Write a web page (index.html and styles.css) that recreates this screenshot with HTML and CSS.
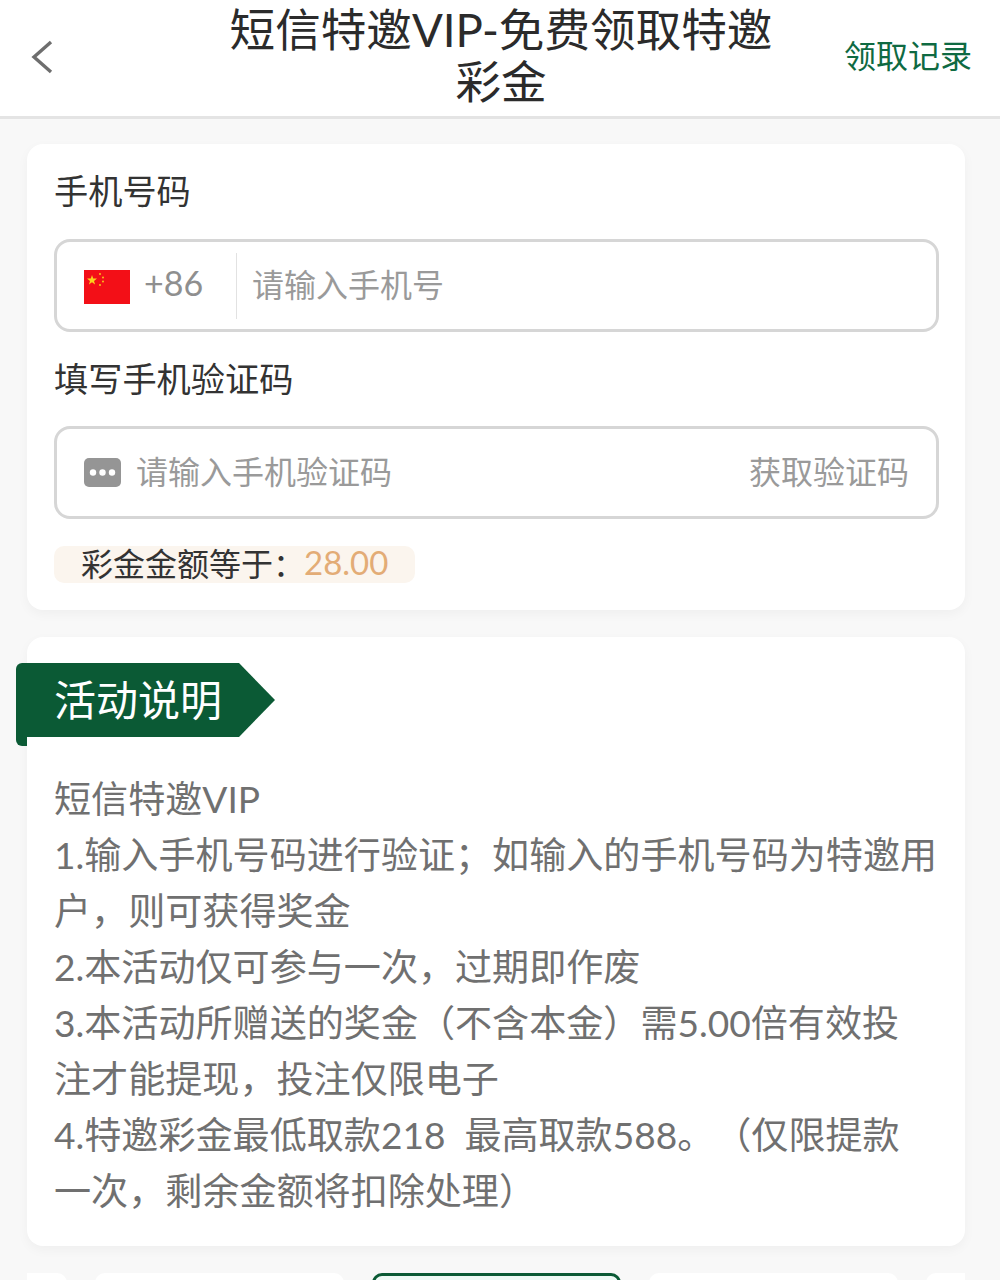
FILE: index.html
```html
<!DOCTYPE html>
<html lang="zh-CN">
<head>
    <meta charset="UTF-8">
    <meta name="viewport" content="width=device-width, initial-scale=1.0">
    <title>短信特邀VIP</title>
    <link rel="stylesheet" href="styles.css">
</head>
<body>
    <div class="page">
        <header class="topbar">
            <a class="back" href="#back" aria-label="返回">
                <svg width="24" height="34" viewBox="0 0 24 34" fill="none" stroke="#6e6e6e" stroke-width="3.4">
                    <path d="M21 2 L4 17 L21 32"/>
                </svg>
            </a>
            <h1 class="title">短信特邀VIP-免费领取特邀彩金</h1>
            <a class="records" href="#records">领取记录</a>
        </header>

        <main class="content">
            <section class="card form_card">
                <div class="field_label">手机号码</div>
                <div class="input_box">
                    <svg class="flag" viewBox="0 0 46 34" width="46" height="34">
                        <rect width="46" height="34" fill="#f30f17"/>
                        <polygon points="8,5 9.2,8.6 13,8.6 10,10.9 11.1,14.5 8,12.3 4.9,14.5 6,10.9 3,8.6 6.8,8.6" fill="#fbd21c"/>
                        <circle cx="16" cy="4" r="0.9" fill="#fbd21c"/>
                        <circle cx="19" cy="7.5" r="0.9" fill="#fbd21c"/>
                        <circle cx="19" cy="11.5" r="0.9" fill="#fbd21c"/>
                        <circle cx="16" cy="15" r="0.9" fill="#fbd21c"/>
                    </svg>
                    <span class="code">+86</span>
                    <span class="divider"></span>
                    <span class="placeholder">请输入手机号</span>
                </div>
                <div class="field_label second">填写手机验证码</div>
                <div class="input_box">
                    <svg class="sms_icon" viewBox="0 0 37 29" width="37" height="29">
                        <rect width="37" height="29" rx="5" fill="#959595"/>
                        <circle cx="9" cy="14.5" r="3.2" fill="#fff"/>
                        <circle cx="18.5" cy="14.5" r="3.2" fill="#fff"/>
                        <circle cx="28" cy="14.5" r="3.2" fill="#fff"/>
                    </svg>
                    <span class="placeholder grow">请输入手机验证码</span>
                    <span class="placeholder">获取验证码</span>
                </div>
                <div class="bonus">
                    <span class="bonus_label">彩金金额等于：</span>
                    <span class="bonus_value">28.00</span>
                </div>
            </section>

            <section class="card info_card">
                <div class="ribbon_wrap">
                    <h2 class="ribbon">活动说明</h2>
                </div>
                <div class="info_text">
                    <p>短信特邀VIP</p>
                    <p>1.输入手机号码进行验证；如输入的手机号码为特邀用<br>户，则可获得奖金</p>
                    <p>2.本活动仅可参与一次，过期即作废</p>
                    <p>3.本活动所赠送的奖金（不含本金）需5.00倍有效投<br>注才能提现，投注仅限电子</p>
                    <p>4.特邀彩金最低取款218&nbsp;&nbsp;最高取款588。（仅限提款<br>一次，剩余金额将扣除处理）</p>
                </div>
            </section>

            <div class="tabs">
                <div class="tab"></div>
                <div class="tab"></div>
                <div class="tab active"></div>
                <div class="tab"></div>
                <div class="tab"></div>
            </div>
        </main>
    </div>
</body>
</html>
```

FILE: styles.css
```css
html, body {
    margin: 0;
    padding: 0;
}
body {
    font-family: Lato, "Noto Sans CJK SC", sans-serif;
    background-color: #f8f8f8;
    text-spacing-trim: space-all;
}
.page {
    height: 1280px;
    overflow: hidden;
}
.topbar {
    height: 116px;
    background: #ffffff;
    border-bottom: 3px solid #e4e4e4;
    display: grid;
    grid-template-columns: 1fr 560px 1fr;
    align-items: center;
    padding: 0 28px 0 30px;
}
.back {
    display: flex;
    width: 24px;
    margin-top: -2px;
}
.title {
    margin: 0 0 4px;
    font-size: 45.6px;
    font-weight: 400;
    line-height: 52px;
    color: #2b2b2b;
    text-align: center;
}
.records {
    color: #0f6a42;
    font-size: 32px;
    text-decoration: none;
    white-space: nowrap;
    justify-self: end;
    margin-bottom: 8px;
}
.content {
    padding: 25px 35px 0 27px;
}
.card {
    background: #ffffff;
    border-radius: 16px;
    box-shadow: 0 4px 12px rgba(0, 0, 0, 0.04);
}
.form_card {
    height: 466px;
    box-sizing: border-box;
    padding: 26px 26px 0 27px;
}
.field_label {
    font-size: 34.2px;
    line-height: 42px;
    color: #333333;
    margin-bottom: 27px;
}
.field_label.second {
    margin-top: 26px;
    margin-bottom: 26px;
}
.input_box {
    height: 93px;
    box-sizing: border-box;
    border: 3px solid #d6d6d6;
    border-radius: 16px;
    display: flex;
    align-items: center;
    padding: 0 27px;
}
.flag {
    flex-shrink: 0;
    margin-top: 2px;
}
.code {
    font-size: 34px;
    color: #8f8f8f;
    margin-left: 14px;
    margin-bottom: 6px;
    width: 92px;
}
.divider {
    width: 1px;
    height: 66px;
    background: #e2e2e2;
    margin-right: 15px;
}
.placeholder {
    font-size: 32px;
    color: #9a9a9a;
    white-space: nowrap;
    margin-bottom: 6px;
}
.grow {
    flex: 1;
}
.sms_icon {
    margin-right: 15px;
    flex-shrink: 0;
}
.bonus {
    margin-top: 27px;
    width: 361px;
    height: 37px;
    box-sizing: border-box;
    padding: 0 0 5px 27px;
    border-radius: 10px;
    background: #fbf5ee;
    display: flex;
    align-items: center;
    white-space: nowrap;
}
.bonus_label {
    font-size: 32px;
    color: #333333;
    width: 223px;
}
.bonus_value {
    font-size: 33px;
    color: #e3ac76;
}
.info_card {
    margin-top: 27px;
    height: 609px;
    box-sizing: border-box;
    padding-top: 26px;
}
.ribbon_wrap {
    position: relative;
    margin-left: -11px;
    width: 259px;
    height: 74px;
}
.ribbon_wrap::before {
    content: "";
    position: absolute;
    left: 0;
    top: 60px;
    width: 11px;
    height: 23px;
    background: #0b5a35;
    border-radius: 0 0 0 6px;
}
.ribbon {
    position: relative;
    margin: 0;
    height: 74px;
    box-sizing: border-box;
    padding-left: 38px;
    background: #0b5a35;
    border-top-left-radius: 6px;
    clip-path: polygon(0 0, 223px 0, 100% 50%, 223px 100%, 0 100%);
    color: #ffffff;
    font-size: 42px;
    font-weight: 400;
    line-height: 74px;
}
.info_text {
    margin-top: 34px;
    padding: 0 0 0 27px;
    font-size: 37.1px;
    line-height: 56px;
    color: #707070;
    white-space: nowrap;
}
.info_text p {
    margin: 0;
}
.tabs {
    margin-top: 27px;
    display: flex;
    justify-content: center;
    gap: 28px;
    overflow: hidden;
    height: 40px;
}
.tab {
    flex-shrink: 0;
    width: 249px;
    height: 60px;
    box-sizing: border-box;
    background: #ffffff;
    border-radius: 10px;
}
.tab.active {
    background: #eefaf5;
    border: 3px solid #0b5a35;
}
```
